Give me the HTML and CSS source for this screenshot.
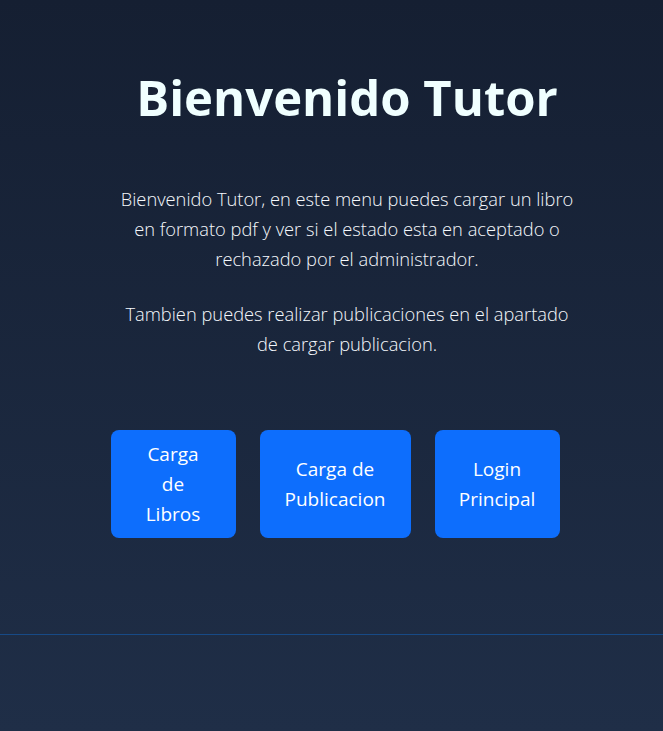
FILE: index.html
```html
<!DOCTYPE html>
<html lang="es">
<head>
<meta charset="utf-8">
<title>Bienvenido Tutor</title>
<link rel="stylesheet" href="styles.css">
</head>
<body>
<div class="page">
  <main class="hero">
    <h1 class="title">Bienvenido Tutor</h1>
    <div class="lead-box">
      <p class="lead">Bienvenido Tutor, en este menu puedes cargar un libro en formato pdf y ver si el estado esta en aceptado o rechazado por el administrador.</p>
      <p class="lead">Tambien puedes realizar publicaciones en el apartado de cargar publicacion.</p>
    </div>
    <div class="actions">
      <a class="btn btn-narrow" href="#">Carga<br>de<br>Libros</a>
      <a class="btn btn-wide" href="#">Carga de Publicacion</a>
      <a class="btn btn-narrow" href="#">Login Principal</a>
    </div>
  </main>
  <footer class="footer"></footer>
</div>
</body>
</html>
```

FILE: styles.css
```css
html, body {
  margin: 0;
  padding: 0;
}

body {
  min-height: 731px;
  background: linear-gradient(180deg, #151f32 0%, #1f2e47 100%);
  font-family: "Open Sans", "Noto Sans", sans-serif;
  color: #f0ffff;
}

.page {
  display: flex;
  flex-direction: column;
  min-height: 731px;
}

.hero {
  display: flex;
  flex-direction: column;
  align-items: center;
  padding: 65px 0 0 31px;
  height: 634px;
  box-sizing: border-box;
}

.title {
  margin: 0;
  font-size: 49px;
  font-weight: 700;
  line-height: 64px;
  color: #f0ffff;
}

.lead-box {
  margin-top: 55px;
  width: 460px;
  text-align: center;
}

.lead {
  margin: 0 0 25px;
  font-size: 18.3px;
  font-weight: 300;
  line-height: 30px;
  color: #f5f8fc;
}

.actions {
  display: flex;
  margin-top: 46px;
}

.btn {
  display: flex;
  align-items: center;
  justify-content: center;
  box-sizing: border-box;
  height: 108px;
  margin-right: 24px;
  padding: 8px 16px;
  border-radius: 8px;
  background: #0d6efd;
  color: #ffffff;
  font-size: 19px;
  line-height: 30px;
  text-align: center;
  text-decoration: none;
}

.btn-narrow {
  width: 125px;
}

.btn-wide {
  width: 151px;
}

.footer {
  border-top: 1px solid #174a86;
  flex: 1;
}
```
